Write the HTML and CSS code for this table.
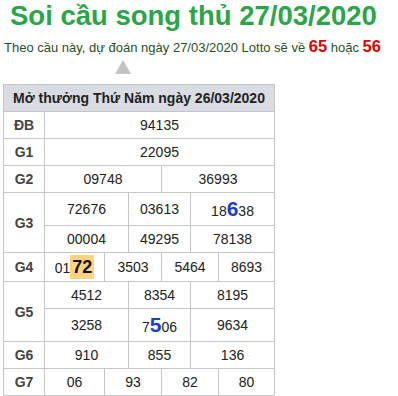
FILE: index.html
```html
<!DOCTYPE html>
<html lang="vi">
<head>
<meta charset="utf-8">
<link rel="stylesheet" href="styles.css">
</head>
<body>
<h1 class="title">Soi cầu song thủ 27/03/2020</h1>
<p class="lead">Theo cầu này, dự đoán ngày 27/03/2020 Lotto sẽ về <b class="hot">65</b> hoặc <b class="hot">56</b></p>
<div class="arrow"></div>
<table class="kq">
  <colgroup>
    <col class="c0"><col class="c1"><col class="c2"><col class="c3"><col class="c4"><col class="c5"><col class="c6">
  </colgroup>
  <tr><th class="head" colspan="7">Mở thưởng Thứ Năm ngày 26/03/2020</th></tr>
  <tr><td class="lbl">ĐB</td><td colspan="6">94135</td></tr>
  <tr><td class="lbl">G1</td><td colspan="6">22095</td></tr>
  <tr><td class="lbl">G2</td><td colspan="3">09748</td><td colspan="3">36993</td></tr>
  <tr><td class="lbl" rowspan="2">G3</td><td colspan="2">72676</td><td colspan="2">03613</td><td colspan="2">18<b class="pick">6</b>38</td></tr>
  <tr><td colspan="2">00004</td><td colspan="2">49295</td><td colspan="2">78138</td></tr>
  <tr><td class="lbl">G4</td><td>01<b class="mark">72</b></td><td colspan="2">3503</td><td colspan="2">5464</td><td>8693</td></tr>
  <tr><td class="lbl" rowspan="2">G5</td><td colspan="2">4512</td><td colspan="2">8354</td><td colspan="2">8195</td></tr>
  <tr><td colspan="2">3258</td><td colspan="2">7<b class="pick">5</b>06</td><td colspan="2">9634</td></tr>
  <tr><td class="lbl">G6</td><td colspan="2">910</td><td colspan="2">855</td><td colspan="2">136</td></tr>
  <tr><td class="lbl">G7</td><td>06</td><td colspan="2">93</td><td colspan="2">82</td><td>80</td></tr>
</table>
</body>
</html>
```
FILE: styles.css
```css
html, body {
  margin: 0;
  padding: 0;
  background: #fff;
}
body {
  font-family: "Liberation Sans", Arial, sans-serif;
  color: #222;
}
.title {
  margin: 0;
  padding: 0 0 0 10px;
  font-size: 27.5px;
  line-height: 32px;
  font-weight: bold;
  color: #2aa548;
}
.lead {
  margin: 6px 0 0 4px;
  font-size: 13px;
  line-height: 16px;
  color: #26511f;
}
.hot {
  color: #e00000;
  font-size: 16.5px;
}
.arrow {
  width: 0;
  height: 0;
  margin: 4px 0 0 115px;
  border-left: 8px solid transparent;
  border-right: 8px solid transparent;
  border-bottom: 14px solid #c4c4c4;
}
.kq {
  margin: 10px 0 0 3px;
  border-collapse: collapse;
  table-layout: fixed;
  width: 271px;
  font-size: 14px;
}
.c0 { width: 41px; }
.c1 { width: 60px; }
.c2 { width: 24px; }
.c3 { width: 33px; }
.c4 { width: 29px; }
.c5 { width: 28px; }
.c6 { width: 56px; }
.kq th, .kq td {
  border: 1px solid #c6c6c6;
  padding: 5px 0;
  line-height: 16px;
  text-align: center;
  white-space: nowrap;
}
.kq .head {
  background: #d9dce3;
  font-size: 14px;
  font-weight: bold;
  color: #222;
}
.kq .lbl {
  font-size: 14px;
  font-weight: bold;
  color: #444;
}
.pick {
  color: #1a3dd6;
  font-size: 21px;
  line-height: 22px;
}
.mark {
  background: #ffd37f;
  color: #111;
  font-size: 18px;
  line-height: 18px;
  padding: 2px 2px;
}
```
